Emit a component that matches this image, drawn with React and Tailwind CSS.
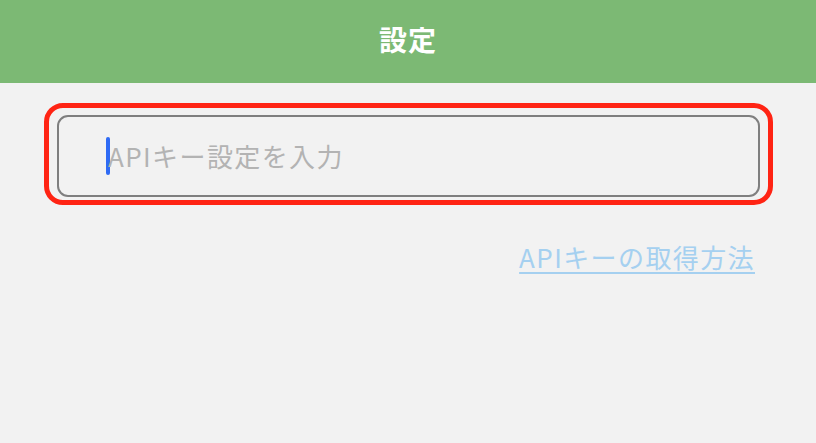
import React from 'react';

const font = { fontFamily: '"Noto Sans CJK JP", "Noto Sans", sans-serif' };

const App = () => {
    return (
        <div className="w-[816px] h-[443px] bg-[#f2f2f2] flex flex-col" style={font}>
            <header className="h-[83px] bg-[#7cb974] flex items-center justify-center">
                <h1 className="text-[28px] font-bold text-white leading-none pb-[6px] tracking-[1px]">設定</h1>
            </header>

            <div className="pt-[20px] pl-[44px] pr-[43px]">
                <div className="border-[5px] border-[#ff2414] rounded-[19px] pt-[7px] pb-[3px] px-[8px]">
                    <div className="h-[82px] border-2 border-[#7f7f7f] rounded-[11px] flex items-center pl-[47px]">
                        <span className="w-[4px] h-[38px] bg-[#2f6bf5] rounded-full mr-[-2px]"></span>
                        <span className="text-[26px] text-[#b3b3b3] leading-none tracking-[1.4px]">APIキー設定を入力</span>
                    </div>
                </div>

                <div className="flex justify-end pr-[18px] mt-[38px]">
                    <a className="text-[26px] leading-[28px] text-[#a5d0f0] tracking-[1.4px] underline underline-offset-[4px] decoration-2 cursor-pointer">
                        APIキーの取得方法
                    </a>
                </div>
            </div>
        </div>
    );
};

export default App;
